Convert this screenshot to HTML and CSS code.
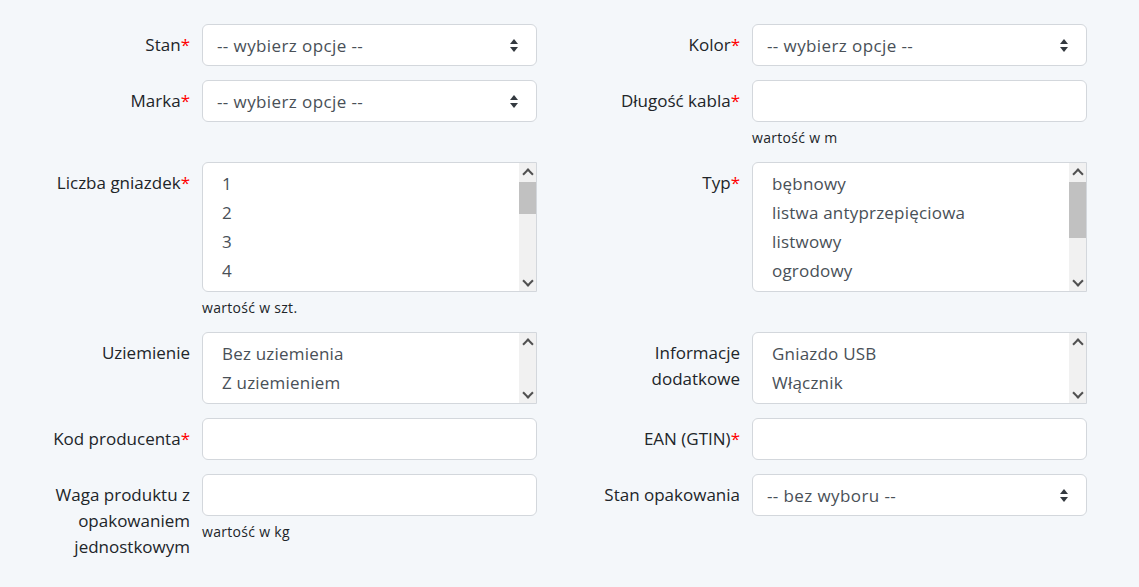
FILE: index.html
```html
<!DOCTYPE html>
<html lang="pl">
<head>
<meta charset="utf-8">
<title>Formularz</title>
<link rel="stylesheet" href="styles.css">
</head>
<body>
<form class="form">
  <div class="field">
    <label class="label">Stan<span class="req">*</span></label>
    <div class="control"><div class="select"><span>-- wybierz opcje --</span><i class="caret"></i></div></div>
  </div>
  <div class="field">
    <label class="label">Kolor<span class="req">*</span></label>
    <div class="control"><div class="select"><span>-- wybierz opcje --</span><i class="caret"></i></div></div>
  </div>

  <div class="field">
    <label class="label">Marka<span class="req">*</span></label>
    <div class="control"><div class="select"><span>-- wybierz opcje --</span><i class="caret"></i></div></div>
  </div>
  <div class="field">
    <label class="label">Długość kabla<span class="req">*</span></label>
    <div class="control"><div class="input"></div><div class="help">wartość w m</div></div>
  </div>

  <div class="field">
    <label class="label">Liczba gniazdek<span class="req">*</span></label>
    <div class="control">
      <div class="listbox tall">
        <ul class="options"><li>1</li><li>2</li><li>3</li><li>4</li></ul>
        <div class="scrollbar"><i class="arr up"></i><div class="track"><div class="thumb thumb-a"></div></div><i class="arr down"></i></div>
      </div>
      <div class="help">wartość w szt.</div>
    </div>
  </div>
  <div class="field">
    <label class="label">Typ<span class="req">*</span></label>
    <div class="control">
      <div class="listbox tall">
        <ul class="options"><li>bębnowy</li><li>listwa antyprzepięciowa</li><li>listwowy</li><li>ogrodowy</li></ul>
        <div class="scrollbar"><i class="arr up"></i><div class="track"><div class="thumb thumb-b"></div></div><i class="arr down"></i></div>
      </div>
    </div>
  </div>

  <div class="field">
    <label class="label">Uziemienie</label>
    <div class="control">
      <div class="listbox short">
        <ul class="options"><li>Bez uziemienia</li><li>Z uziemieniem</li></ul>
        <div class="scrollbar"><i class="arr up"></i><div class="track"></div><i class="arr down"></i></div>
      </div>
    </div>
  </div>
  <div class="field">
    <label class="label">Informacje dodatkowe</label>
    <div class="control">
      <div class="listbox short">
        <ul class="options"><li>Gniazdo USB</li><li>Włącznik</li></ul>
        <div class="scrollbar"><i class="arr up"></i><div class="track"></div><i class="arr down"></i></div>
      </div>
    </div>
  </div>

  <div class="field">
    <label class="label">Kod producenta<span class="req">*</span></label>
    <div class="control"><div class="input"></div></div>
  </div>
  <div class="field">
    <label class="label">EAN (GTIN)<span class="req">*</span></label>
    <div class="control"><div class="input"></div></div>
  </div>

  <div class="field">
    <label class="label">Waga produktu z opakowaniem jednostkowym</label>
    <div class="control"><div class="input"></div><div class="help">wartość w kg</div></div>
  </div>
  <div class="field">
    <label class="label">Stan opakowania</label>
    <div class="control"><div class="select"><span>-- bez wyboru --</span><i class="caret"></i></div></div>
  </div>
</form>
</body>
</html>
```

FILE: styles.css
```css
* { box-sizing: border-box; }
html, body { margin: 0; padding: 0; }
body {
  background: #f4f7fa;
  font-family: "Open Sans", "Noto Sans", sans-serif;
  font-size: 17px;
  letter-spacing: 0.2px;
  color: #212529;
}
.form {
  display: grid;
  grid-template-columns: 497px 497px;
  column-gap: 53px;
  row-gap: 14px;
  padding: 24px 0 0 40px;
  align-items: start;
}
.field {
  display: grid;
  grid-template-columns: 150px 335px;
  column-gap: 12px;
  align-items: start;
}
.label {
  text-align: right;
  line-height: 26px;
  padding-top: 8px;
  letter-spacing: 0;
}
.req { color: #ff0000; }
.select, .input {
  height: 42px;
  background: #fff;
  border: 1px solid #d3d7dc;
  border-radius: 6px;
}
.select {
  display: flex;
  align-items: center;
  justify-content: space-between;
  padding: 0 17px 0 14px;
  color: #495057;
  letter-spacing: 0.4px;
}
.caret {
  width: 9px;
  height: 13px;
  display: flex;
  flex-direction: column;
  justify-content: space-between;
}
.caret::before, .caret::after {
  content: "";
  display: block;
  width: 0; height: 0;
  border-left: 4.5px solid transparent;
  border-right: 4.5px solid transparent;
}
.caret::before { border-bottom: 5px solid #343a40; }
.caret::after { border-top: 5px solid #343a40; }
.help {
  font-size: 14px;
  letter-spacing: 0.3px;
  line-height: 20px;
  margin-top: 6px;
  color: #212529;
}
.listbox {
  display: flex;
  background: #fff;
  border: 1px solid #d3d7dc;
  border-radius: 6px 0 0 6px;
  overflow: hidden;
}
.listbox.tall { height: 130px; }
.listbox.short { height: 72px; }
.options {
  list-style: none;
  margin: 0;
  padding: 6px 0 0 19px;
  flex: 1;
  color: #495057;
}
.options li { line-height: 29px; }
.scrollbar {
  width: 17px;
  background: #f1f1f1;
  display: flex;
  flex-direction: column;
}
.track { flex: 1; }
.arr {
  height: 17px;
  display: flex;
  align-items: center;
  justify-content: center;
}
.arr::before {
  content: "";
  width: 6px; height: 6px;
  border-left: 2px solid #505050;
  border-top: 2px solid #505050;
}
.arr.up::before { transform: translateY(2px) rotate(45deg); }
.arr.down::before { transform: translateY(-2px) rotate(225deg); }
.thumb {
  background: #c1c1c1;
  margin-top: 2px;
}
.thumb-a { height: 32px; }
.thumb-b { height: 56px; }
```
